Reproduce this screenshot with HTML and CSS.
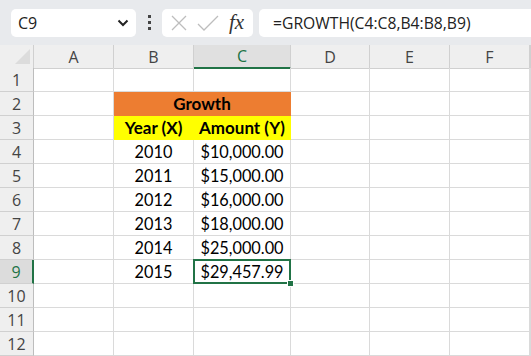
FILE: index.html
```html
<!DOCTYPE html>
<html lang="en">
  <head>
    <meta charset="UTF-8" />
    <title>Growth</title>
    <link rel="stylesheet" href="styles.css">
  </head>
  <body>
    <div class="toolbar">
      <div class="nameBox">
        <span>C9</span>
        <svg width="12" height="8" viewBox="0 0 12 8"><path d="M1.5 1.5 L6 6 L10.5 1.5" fill="none" stroke="#222" stroke-width="2"/></svg>
      </div>
      <div class="dots"><i></i><i></i><i></i></div>
      <div class="fxBox">
        <svg width="18" height="18" viewBox="0 0 18 18"><path d="M2 2 L16 16 M16 2 L2 16" stroke="#bdbdbd" stroke-width="1.3"/></svg>
        <svg width="22" height="18" viewBox="0 0 22 18"><path d="M1 10 L7 16 L21 2" fill="none" stroke="#bdbdbd" stroke-width="1.3"/></svg>
        <span class="fx">fx</span>
      </div>
      <div class="formula">=GROWTH(C4:C8,B4:B8,B9)</div>
    </div>

    <div class="sheet">
      <div class="row head">
        <div class="corner"><span></span></div>
        <div>A</div><div>B</div><div class="sel">C</div><div>D</div><div>E</div><div>F</div><div></div>
      </div>
      <div class="row">
        <div class="num">1</div><div></div><div></div><div></div><div></div><div></div><div></div><div></div>
      </div>
      <div class="row">
        <div class="num">2</div><div></div><div class="title">Growth</div><div></div><div></div><div></div><div></div>
      </div>
      <div class="row">
        <div class="num">3</div><div></div><div class="label">Year (X)</div><div class="label">Amount (Y)</div><div></div><div></div><div></div><div></div>
      </div>
      <div class="row">
        <div class="num">4</div><div></div><div>2010</div><div>$10,000.00</div><div></div><div></div><div></div><div></div>
      </div>
      <div class="row">
        <div class="num">5</div><div></div><div>2011</div><div>$15,000.00</div><div></div><div></div><div></div><div></div>
      </div>
      <div class="row">
        <div class="num">6</div><div></div><div>2012</div><div>$16,000.00</div><div></div><div></div><div></div><div></div>
      </div>
      <div class="row">
        <div class="num">7</div><div></div><div>2013</div><div>$18,000.00</div><div></div><div></div><div></div><div></div>
      </div>
      <div class="row">
        <div class="num">8</div><div></div><div>2014</div><div>$25,000.00</div><div></div><div></div><div></div><div></div>
      </div>
      <div class="row">
        <div class="num active">9</div><div></div><div>2015</div><div class="current">$29,457.99</div><div></div><div></div><div></div><div></div>
      </div>
      <div class="row">
        <div class="num">10</div><div></div><div></div><div></div><div></div><div></div><div></div><div></div>
      </div>
      <div class="row">
        <div class="num">11</div><div></div><div></div><div></div><div></div><div></div><div></div><div></div>
      </div>
      <div class="row">
        <div class="num">12</div><div></div><div></div><div></div><div></div><div></div><div></div><div></div>
      </div>
    </div>
  </body>
</html>
```
FILE: styles.css
```css
html, body {
  margin: 0;
  padding: 0;
  background: #fff;
  overflow: hidden;
}
body {
  width: 531px;
  height: 356px;
}
.toolbar {
  height: 45px;
  background: #e8eaed;
  display: flex;
  align-items: center;
  padding-left: 11px;
  box-sizing: border-box;
  font-family: 'Open Sans', sans-serif;
  color: #222;
}
.nameBox {
  width: 125px;
  height: 28px;
  box-sizing: border-box;
  background: #fff;
  border-radius: 5px;
  display: flex;
  align-items: center;
  justify-content: space-between;
  padding: 0 7px 0 7px;
  font-size: 16px;
}
.dots {
  width: 26px;
  display: flex;
  flex-direction: column;
  align-items: center;
  gap: 3px;
}
.dots i {
  width: 3px;
  height: 3px;
  background: #444;
}
.fxBox {
  width: 91px;
  height: 28px;
  box-sizing: border-box;
  background: #fff;
  border-radius: 5px;
  display: flex;
  align-items: center;
  padding-left: 8px;
  gap: 9px;
}
.fx {
  font-family: 'Liberation Serif', serif;
  font-style: italic;
  font-size: 21px;
  color: #333;
  margin-left: 1px;
  line-height: 1;
}
.formula {
  flex: 1;
  height: 28px;
  margin-left: 6px;
  background: #fff;
  border-radius: 5px 0 0 5px;
  display: flex;
  align-items: center;
  padding-left: 14px;
  font-size: 15.7px;
}
.row {
  display: grid;
  grid-template-columns: 34px 80px 80px 97px 79px 80px 80px 1fr;
  height: 24px;
  font-family: 'Lato', sans-serif;
  font-size: 16.3px;
  color: #000;
}
.row > div {
  border-right: 1px solid #dadada;
  border-bottom: 1px solid #dadada;
  display: flex;
  align-items: center;
  justify-content: center;
  box-sizing: border-box;
  white-space: nowrap;
}
.row.head {
  height: 23px;
  background: #efefef;
  font-family: 'Open Sans', sans-serif;
  font-size: 16px;
  color: #444;
}
.row.head > div {
  border-right-color: #d0d0d0;
  border-bottom: 1px solid #d0d0d0;
}
.row.head .sel {
  background: #e0e0e0;
  color: #217346;
  border-bottom: 2px solid #217346;
}
.corner {
  justify-content: flex-end !important;
  align-items: flex-end !important;
  padding: 0 3px 4px 0;
}
.corner span {
  width: 0;
  height: 0;
  border-left: 15px solid transparent;
  border-bottom: 15px solid #dcdcdc;
}
.row > .num {
  background: #efefef;
  border-right-color: #bdbdbd;
  border-bottom-color: #d0d0d0;
  font-family: 'Open Sans', sans-serif;
  font-size: 16px;
  color: #444;
}
.row > .num.active {
  background: #dcdcdc;
  color: #217346;
  border-right: 2px solid #217346;
}
.row > .title {
  grid-column: span 2;
  background: #ed7d31;
  border-color: #ed7d31;
  font-weight: bold;
  font-size: 17px;
}
.row > .label {
  background: #ffff00;
  border-color: #ffff00;
  font-weight: bold;
  font-size: 17px;
}
.current {
  position: relative;
}
.current::after {
  content: '';
  position: absolute;
  left: -1px;
  top: -1px;
  right: -1px;
  bottom: -1px;
  border: 2px solid #217346;
}
.current::before {
  content: '';
  position: absolute;
  right: -4px;
  bottom: -4px;
  width: 5px;
  height: 5px;
  background: #217346;
  border: 1px solid #fff;
  z-index: 1;
}
```
